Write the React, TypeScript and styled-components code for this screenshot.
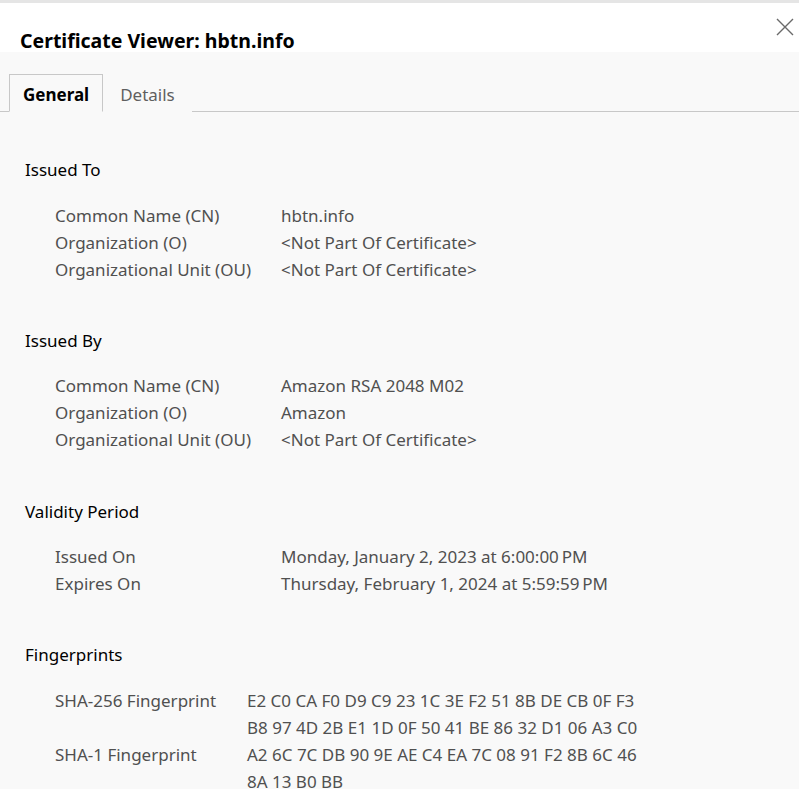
import React from 'react';
import styled, { createGlobalStyle } from 'styled-components';

type Row = {
    label: string
    values: string[]
}

type SectionType = {
    title: string
    labelWidth: number
    rows: Row[]
}

const sections: SectionType[] = [
    {
        title: 'Issued To',
        labelWidth: 226,
        rows: [
            { label: 'Common Name (CN)', values: ['hbtn.info'] },
            { label: 'Organization (O)', values: ['<Not Part Of Certificate>'] },
            { label: 'Organizational Unit (OU)', values: ['<Not Part Of Certificate>'] },
        ],
    },
    {
        title: 'Issued By',
        labelWidth: 226,
        rows: [
            { label: 'Common Name (CN)', values: ['Amazon RSA 2048 M02'] },
            { label: 'Organization (O)', values: ['Amazon'] },
            { label: 'Organizational Unit (OU)', values: ['<Not Part Of Certificate>'] },
        ],
    },
    {
        title: 'Validity Period',
        labelWidth: 226,
        rows: [
            { label: 'Issued On', values: ['Monday, January 2, 2023 at 6:00:00\u202FPM'] },
            { label: 'Expires On', values: ['Thursday, February 1, 2024 at 5:59:59\u202FPM'] },
        ],
    },
    {
        title: 'Fingerprints',
        labelWidth: 192,
        rows: [
            {
                label: 'SHA-256 Fingerprint',
                values: ['E2 C0 CA F0 D9 C9 23 1C 3E F2 51 8B DE CB 0F F3', 'B8 97 4D 2B E1 1D 0F 50 41 BE 86 32 D1 06 A3 C0'],
            },
            {
                label: 'SHA-1 Fingerprint',
                values: ['A2 6C 7C DB 90 9E AE C4 EA 7C 08 91 F2 8B 6C 46', '8A 13 B0 BB'],
            },
        ],
    },
];

const GlobalStyle = createGlobalStyle`
    html, body {
        margin: 0;
        padding: 0;
        background: #f9f9f9;
        font-family: "Noto Sans", "Open Sans", sans-serif;
        overflow: hidden;
    }
`

const Dialog = styled.div`
    width: 799px;
    height: 789px;
    border-top: 3px solid #e5e5e5;
    box-sizing: border-box;
    background: #f9f9f9;
`

const Header = styled.header`
    height: 49px;
    background: #ffffff;
    display: flex;
    justify-content: space-between;
    align-items: flex-end;
    padding: 0 0 0 20px;
    position: relative;
`

const Title = styled.h1`
    margin: 0 0 -3px;
    font-size: 19.5px;
    font-weight: 700;
    color: #000;
    line-height: 28px;
`

const Close = styled.button`
    position: absolute;
    top: 13px;
    right: 3px;
    width: 22px;
    height: 22px;
    padding: 0;
    border: none;
    background: none;
    display: flex;
    align-items: center;
    justify-content: center;
`

const Tabs = styled.nav`
    display: flex;
    align-items: flex-end;
    margin-top: 22px;
    padding-left: 9px;
    border-bottom: 1px solid #c8c8c8;
    height: 37px;
`

const Tab = styled.div<{ $active?: boolean }>`
    height: 38px;
    box-sizing: border-box;
    padding: 0 ${p => (p.$active ? '13px' : '16px')};
    margin-bottom: -1px;
    display: flex;
    align-items: center;
    font-size: 17px;
    color: ${p => (p.$active ? '#000' : '#5f5f5f')};
    font-weight: ${p => (p.$active ? 700 : 400)};
    border: 1px solid ${p => (p.$active ? '#c8c8c8' : 'transparent')};
    border-bottom: 1px solid ${p => (p.$active ? '#f9f9f9' : 'transparent')};
    background: #f9f9f9;
    padding-top: 2px;
`

const Body = styled.main`
    padding: 44px 0 0 25px;
`

const Section = styled.section`
    margin-bottom: 44.25px;
`

const SectionTitle = styled.h2`
    margin: 0 0 18.5px;
    font-size: 17px;
    font-weight: 400;
    color: #000;
    line-height: 27px;
`

const Grid = styled.div<{ $labelWidth: number }>`
    display: grid;
    grid-template-columns: ${p => p.$labelWidth}px 1fr;
    padding-left: 30px;
    font-size: 17px;
    line-height: 27px;
    color: #505050;
`

const Label = styled.div``

const Value = styled.div``

export default function App() {
    return (
        <>
            <GlobalStyle />
            <Dialog>
                <Header>
                    <Title>Certificate Viewer: hbtn.info</Title>
                    <Close aria-label="Close">
                        <svg width="20" height="20" viewBox="0 0 20 20">
                            <path d="M2 2 L18 18 M18 2 L2 18" stroke="#6a6a6a" strokeWidth="1.4" fill="none" />
                        </svg>
                    </Close>
                </Header>
                <Tabs>
                    <Tab $active>General</Tab>
                    <Tab>Details</Tab>
                </Tabs>
                <Body>
                    {sections.map(section => (
                        <Section key={section.title}>
                            <SectionTitle>{section.title}</SectionTitle>
                            <Grid $labelWidth={section.labelWidth}>
                                {section.rows.map(row => (
                                    <React.Fragment key={row.label}>
                                        <Label>{row.label}</Label>
                                        <Value>
                                            {row.values.map(v => (
                                                <div key={v}>{v}</div>
                                            ))}
                                        </Value>
                                    </React.Fragment>
                                ))}
                            </Grid>
                        </Section>
                    ))}
                </Body>
            </Dialog>
        </>
    );
}
